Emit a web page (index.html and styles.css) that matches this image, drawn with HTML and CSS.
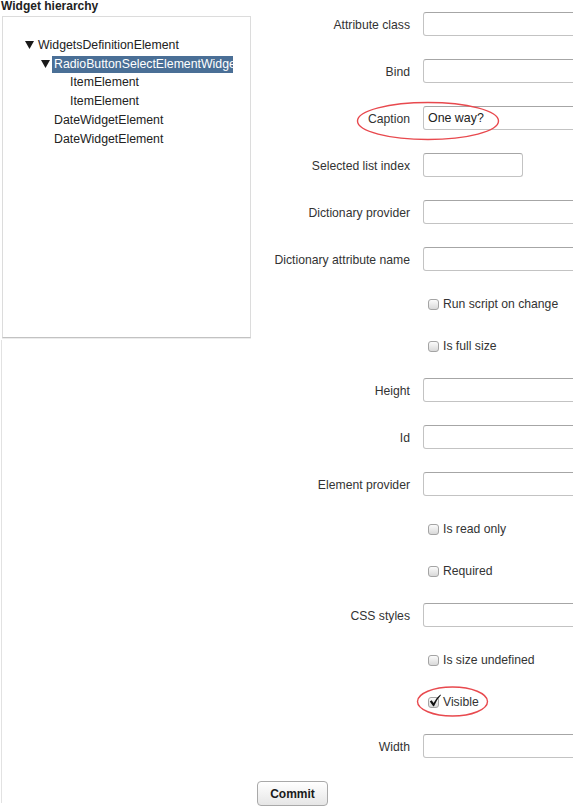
FILE: index.html
```html
<!DOCTYPE html>
<html>
<head>
<meta charset="utf-8">
<title>Widget editor</title>
<link rel="stylesheet" href="styles.css">
</head>
<body>
<div class="page">
  <div class="tree-col">
    <div class="title">Widget hierarchy</div>
    <div class="panel">
      <div class="tree">
        <div class="row lvl0"><svg class="tri" width="9" height="8" viewBox="0 0 9 8"><polygon points="0,0 9,0 4.5,8"/></svg><span class="node">WidgetsDefinitionElement</span></div>
        <div class="row lvl1"><svg class="tri" width="9" height="8" viewBox="0 0 9 8"><polygon points="0,0 9,0 4.5,8"/></svg><span class="node selected">RadioButtonSelectElementWidget</span></div>
        <div class="row lvl2 leaf"><span class="node">ItemElement</span></div>
        <div class="row lvl2 leaf"><span class="node">ItemElement</span></div>
        <div class="row lvl1 leaf"><span class="node">DateWidgetElement</span></div>
        <div class="row lvl1 leaf"><span class="node">DateWidgetElement</span></div>
      </div>
    </div>
    <div class="filler"></div>
  </div>

  <div class="form-col">
    <div class="form">
      <label class="lbl field">Attribute class</label><div class="ctl field"><input type="text" class="txt"></div>
      <label class="lbl field">Bind</label><div class="ctl field"><input type="text" class="txt"></div>
      <label class="lbl field">Caption</label><div class="ctl field"><input type="text" class="txt" value="One way?"></div>
      <label class="lbl field">Selected list index</label><div class="ctl field"><input type="text" class="txt short"></div>
      <label class="lbl field">Dictionary provider</label><div class="ctl field"><input type="text" class="txt"></div>
      <label class="lbl field">Dictionary attribute name</label><div class="ctl field"><input type="text" class="txt"></div>
      <div class="lbl check"></div><div class="ctl check"><span class="cb"></span><span class="cbl">Run script on change</span></div>
      <div class="lbl check"></div><div class="ctl check"><span class="cb"></span><span class="cbl">Is full size</span></div>
      <label class="lbl field">Height</label><div class="ctl field"><input type="text" class="txt"></div>
      <label class="lbl field">Id</label><div class="ctl field"><input type="text" class="txt"></div>
      <label class="lbl field">Element provider</label><div class="ctl field"><input type="text" class="txt"></div>
      <div class="lbl check"></div><div class="ctl check"><span class="cb"></span><span class="cbl">Is read only</span></div>
      <div class="lbl check"></div><div class="ctl check"><span class="cb"></span><span class="cbl">Required</span></div>
      <label class="lbl field">CSS styles</label><div class="ctl field"><input type="text" class="txt"></div>
      <div class="lbl check"></div><div class="ctl check"><span class="cb"></span><span class="cbl">Is size undefined</span></div>
      <div class="lbl check"></div><div class="ctl check"><span class="cb checked"><svg class="tick" width="12" height="13" viewBox="0 0 12 13"><path d="M0.8 7.6 L2.6 6.2 L4.6 9 Q7.4 3.6 11.4 0.6 L11.9 1.3 Q8 5.2 5 12.2 L4.2 12.2 Z"/></svg></span><span class="cbl">Visible</span></div>
      <label class="lbl field">Width</label><div class="ctl field"><input type="text" class="txt"></div>
    </div>
    <div class="actions"><button class="commit">Commit</button></div>
  </div>

  <svg class="marks" width="573" height="806" viewBox="0 0 573 806">
    <ellipse cx="428" cy="121" rx="70.5" ry="18.5"/>
    <ellipse cx="452.5" cy="701.5" rx="35" ry="14.5"/>
  </svg>
</div>
</body>
</html>
```

FILE: styles.css
```css
html, body {
  margin: 0;
  padding: 0;
  overflow: hidden;
  background: #fff;
}

body {
  font-family: "Liberation Sans", Arial, sans-serif;
  font-size: 12.2px;
  color: #333;
}

.page {
  position: relative;
  display: flex;
  width: 573px;
  height: 806px;
}

/* ---------- left column ---------- */
.tree-col {
  width: 249px;
  flex: none;
  display: flex;
  flex-direction: column;
  padding-left: 2px;
}

.title {
  font-size: 12px;
  font-weight: bold;
  line-height: 12px;
  color: #222;
  margin-left: -1px;
  white-space: nowrap;
}

.panel {
  box-sizing: border-box;
  margin-top: 4px;
  height: 322px;
  border: 1px solid #dcdcdc;
  border-bottom-color: #c2c2c2;
  box-shadow: 0 1px 0 #ececec;
  padding: 19px 17px 0 22px;
}

.tree {
  overflow: hidden;
  color: #222;
  font-size: 12.3px;
}

.row {
  display: flex;
  align-items: center;
  height: 18.8px;
  white-space: nowrap;
}

.lvl1 { padding-left: 16px; }
.lvl2 { padding-left: 32px; }
.leaf { padding-left: 13px; }
.lvl1.leaf { padding-left: 29px; }
.lvl2.leaf { padding-left: 45px; }

.tri {
  flex: none;
  margin-right: 4px;
  fill: #1a1a1a;
}

.node {
  line-height: 17px;
}

.selected {
  background: #4a6f96;
  color: #fff;
  margin-left: -2px;
  padding: 0 2px;
}

.filler {
  flex: 1;
  margin-left: -1px;
  margin-top: 2px;
  margin-bottom: 3px;
  border-left: 1px solid #e2e2e2;
}

/* ---------- right column ---------- */
.form-col {
  flex: 1;
  min-width: 0;
}

.form {
  display: grid;
  grid-template-columns: 159px 1fr;
  column-gap: 13px;
}

.lbl {
  display: flex;
  align-items: center;
  justify-content: flex-end;
  white-space: nowrap;
  color: #333;
  padding-top: 2px;
  box-sizing: border-box;
}

.ctl {
  display: flex;
  align-items: center;
  white-space: nowrap;
}

.field { height: 47px; }
.check { height: 42px; }

.txt {
  box-sizing: border-box;
  width: 200px;
  flex: none;
  height: 24px;
  margin: 0;
  padding: 0 4px;
  border: 1px solid #c3c3c3;
  border-top-color: #a6a6a6;
  border-radius: 3px;
  font-family: "Liberation Sans", Arial, sans-serif;
  font-size: 12.4px;
  color: #222;
  background: #fff;
  outline: none;
}

.txt.short { width: 100px; }

.ctl.check { padding-left: 5px; }

.cb {
  position: relative;
  box-sizing: border-box;
  width: 11px;
  height: 11px;
  flex: none;
  border: 1px solid #a4a4a4;
  border-radius: 3px;
  background: linear-gradient(#fbfbfb, #d9d9d9);
  margin-top: 2px;
}

.tick {
  position: absolute;
  left: 0;
  top: -4px;
  fill: #111;
}

.cbl {
  margin-left: 4px;
  padding-top: 2px;
  color: #333;
}

.actions {
  padding: 12px 0 0 6px;
}

.commit {
  width: 71px;
  height: 25px;
  margin: 0;
  padding: 0;
  border: 1px solid #a9a9a9;
  border-radius: 4px;
  background: linear-gradient(#ffffff, #e6e6e6);
  font-family: "Liberation Sans", Arial, sans-serif;
  font-size: 12px;
  font-weight: bold;
  color: #1a1a1a;
}

/* ---------- annotation overlay ---------- */
.marks {
  position: absolute;
  left: 0;
  top: 0;
  pointer-events: none;
  fill: none;
  stroke: #e8494e;
  stroke-width: 1.4;
}
```
